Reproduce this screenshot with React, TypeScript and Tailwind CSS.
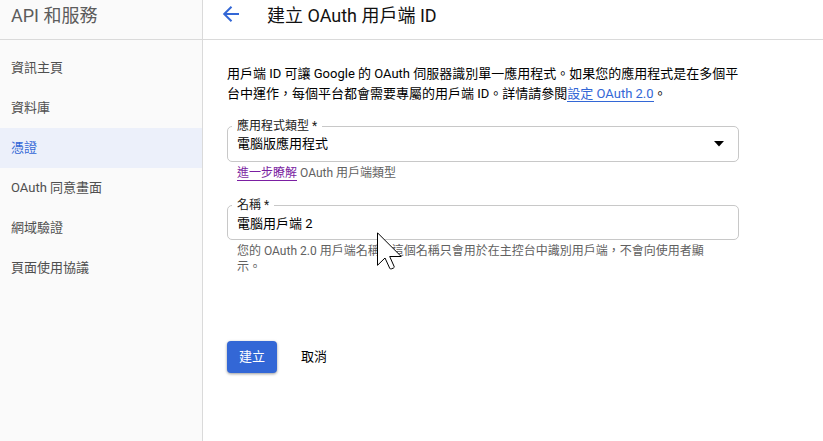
import { useState } from "react";

const navItems = [
  { label: "資訊主頁" },
  { label: "資料庫" },
  { label: "憑證", active: true },
  { label: "OAuth 同意畫面" },
  { label: "網域驗證" },
  { label: "頁面使用協議" },
];

function Sidebar() {
  return (
    <aside className="w-[203px] shrink-0 border-r border-[#dadada] bg-[#fafafa]">
      <div className="flex h-10 items-start border-b border-[#dadada] px-[11px] pt-1">
        <h2 className="text-lg leading-6 text-[#5c5c5c]">API 和服務</h2>
      </div>
      <nav className="pt-2">
        <ul>
          {navItems.map((item) => (
            <li key={item.label}>
              <a
                href="#"
                aria-current={item.active ? "page" : undefined}
                className={
                  item.active
                    ? "flex h-10 items-center bg-[#ecf0fa] px-[11px] text-[#3367d6]"
                    : "flex h-10 items-center px-[11px] text-[#4f4f4f]"
                }
              >
                {item.label}
              </a>
            </li>
          ))}
        </ul>
      </nav>
    </aside>
  );
}

function FieldLabel({ htmlFor, text }: { htmlFor: string; text: string }) {
  return (
    <label
      htmlFor={htmlFor}
      className="absolute -top-2 left-[5px] bg-white px-[5px] text-xs leading-4 text-[#202020]"
    >
      {text} <span>*</span>
    </label>
  );
}

function Cursor() {
  return (
    <svg
      className="pointer-events-none absolute top-[27px] left-[150px] z-10"
      width="25"
      height="39"
      viewBox="0 0 25 39"
      aria-hidden="true"
    >
      <path
        d="M.5.8V33.3L8 26L12.7 36.2Q13.2 37.3 14.3 36.9L16.5 36Q17.6 35.5 17.1 34.4L12.7 24.5H24.2Z"
        fill="#fff"
        stroke="#000"
        strokeWidth="1"
      />
    </svg>
  );
}

export default function App() {
  const [type, setType] = useState("desktop");
  const [name, setName] = useState("電腦用戶端 2");

  return (
    <div className="flex min-h-screen bg-white font-[Roboto,'Noto_Sans_CJK_TC',sans-serif] text-[13px] leading-5 text-black">
      <Sidebar />
      <div className="min-w-0 flex-1">
        <header className="flex h-10 items-start border-b border-[#dadada] px-[18px] pt-1">
          <button type="button" aria-label="返回" className="-mt-[2px] flex size-6 text-[#3367d6]">
            <svg width="20" height="24" viewBox="0 0 20 24" fill="none" stroke="currentColor" strokeWidth="2" aria-hidden="true">
              <path d="M18 12H3.5M10.5 4.7L3.2 12L10.5 19.3" />
            </svg>
          </button>
          <h1 className="ml-[22px] text-lg leading-6 text-[#111]">建立 OAuth 用戶端 ID</h1>
        </header>
        <main className="max-w-[560px] px-6 pt-6 pb-8">
          <p>
            用戶端 ID 可讓 Google 的 OAuth 伺服器識別單一應用程式。如果您的應用程式是在多個平台中運作，每個平台都會需要專屬的用戶端 ID。詳情請參閱
            <a href="#" className="border-b border-[#3367d6] text-[#3367d6]">設定 OAuth 2.0</a>。
          </p>
          <form onSubmit={(e) => e.preventDefault()}>
            <div className="relative mt-[22px]">
              <select
                id="app-type"
                value={type}
                onChange={(e) => setType(e.target.value)}
                className="block h-9 w-full appearance-none rounded-[5px] border border-[#c8c8c8] bg-white px-[9px]"
              >
                <option value="desktop">電腦版應用程式</option>
              </select>
              <FieldLabel htmlFor="app-type" text="應用程式類型" />
              <svg className="pointer-events-none absolute top-[15px] right-[14px]" width="12" height="6" viewBox="0 0 12 6" aria-hidden="true">
                <path d="M1 0H11L6 5.5Z" />
              </svg>
            </div>
            <p className="mt-[3px] px-[10px] text-xs leading-4 text-[#616161]">
              <a href="#" className="border-b border-[#7b1fa2] text-[#7b1fa2]">進一步瞭解</a> OAuth 用戶端類型
            </p>
            <div className="relative mt-6">
              <input
                id="client-name"
                type="text"
                value={name}
                onChange={(e) => setName(e.target.value)}
                className="block h-[35px] w-full rounded-[5px] border border-[#c8c8c8] bg-white px-[9px]"
              />
              <FieldLabel htmlFor="client-name" text="名稱" />
              <Cursor />
            </div>
            <p className="mt-[3px] pr-7 pl-[10px] text-xs leading-4 text-[#616161]">
              您的 OAuth 2.0 用戶端名稱。這個名稱只會用於在主控台中識別用戶端，不會向使用者顯示。
            </p>
            <div className="mt-[66px] flex gap-3">
              <button type="submit" className="h-8 rounded bg-[#3367d6] px-3 text-white shadow-[0_1px_3px_rgba(0,0,0,0.4)]">
                建立
              </button>
              <button type="button" className="h-8 px-3">
                取消
              </button>
            </div>
          </form>
        </main>
      </div>
    </div>
  );
}
